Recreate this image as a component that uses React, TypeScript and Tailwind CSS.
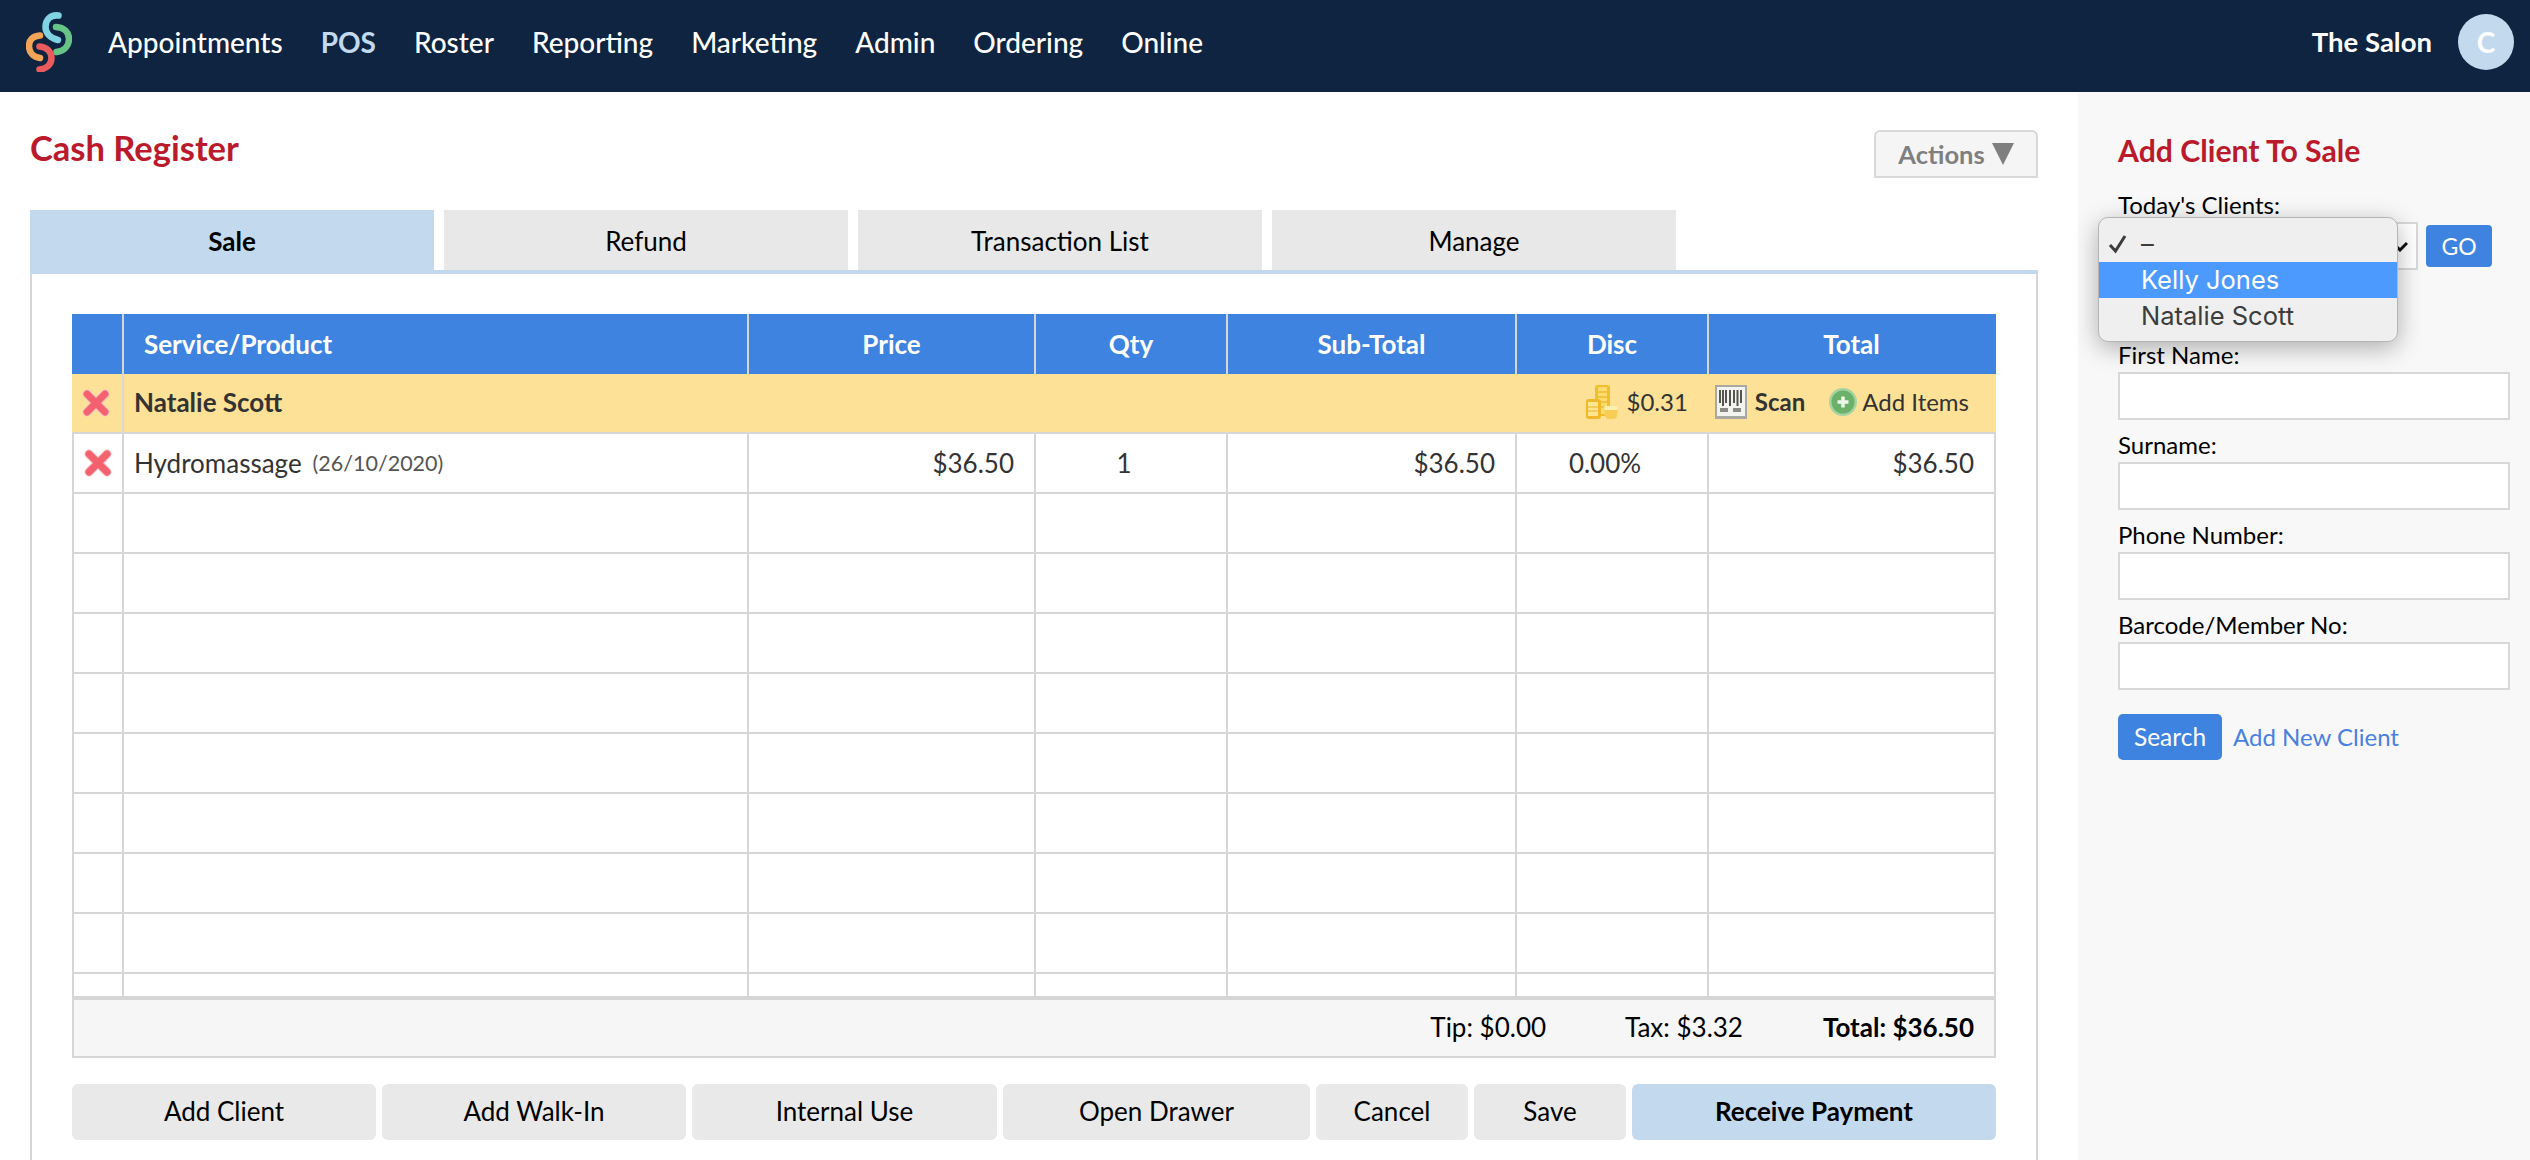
const menu = ["Appointments", "POS", "Roster", "Reporting", "Marketing", "Admin", "Ordering", "Online"];
const tabs = ["Sale", "Refund", "Transaction List", "Manage"];
const emptyRows = [1, 2, 3, 4, 5, 6, 7, 8, 9];
const clients = ["First Name:", "Surname:", "Phone Number:", "Barcode/Member No:"];

const headCols = "grid grid-cols-[52px_625px_287px_192px_289px_192px_287px]";
const rowCols = "grid grid-cols-[50px_625px_287px_192px_289px_192px_287px]";
const cell = "border-r-2 border-[#d6d6d6] h-full";

function Logo() {
  return (
    <svg viewBox="26 12 46 60" className="w-[46px] h-[60px] ml-[26px] shrink-0" fill="none" strokeWidth="6.5" strokeLinecap="round">
      <path d="M58.5 15.5C50 14.5 45.5 20 45.5 27C45.5 33 50 38 58 40" stroke="#7fd3e2" />
      <path d="M56 27C64 27.5 69 32 69 39C69 46 64 51 56.5 52" stroke="#68c386" />
      <path d="M40 35.5C32.5 36 29 40.5 29 46C29 52 33 57 40 58" stroke="#f4a457" />
      <path d="M39.5 46.5C47 47 51.5 52 51.5 58C51.5 64.5 46.5 69 39.5 69.5" stroke="#e95b5c" />
    </svg>
  );
}

function RedX() {
  return (
    <svg viewBox="0 0 28 28" className="w-[28px] h-[28px]" fill="none" strokeLinecap="round">
      <path d="M5 5L23 23M23 5L5 23" stroke="#fbc3c7" strokeWidth="9" />
      <path d="M5 5L23 23M23 5L5 23" stroke="#f4616f" strokeWidth="7" />
    </svg>
  );
}

function Coins() {
  return (
    <svg viewBox="0 0 32 34" className="w-[32px] h-[34px]">
      <rect x="9" y="0" width="15" height="31" rx="3" fill="#f3bd2d" />
      <rect x="12" y="2" width="9" height="27" fill="#fbdc6c" />
      <path d="M12 7h9M12 12h9M12 17h9M12 22h9" stroke="#e8ab20" strokeWidth="1" />
      <rect x="0" y="14" width="15" height="20" rx="3" fill="#f1b82a" />
      <rect x="2" y="17" width="10" height="14" fill="#fde68f" />
      <path d="M2 22h10M2 26h10" stroke="#eab32d" strokeWidth="1" />
      <path d="M18 22h14l-1 9a4 4 0 0 1-4 3h-4a4 4 0 0 1-4-3z" fill="#f6cd55" />
      <rect x="18" y="21" width="14" height="4" rx="2" fill="#fdeeb0" />
    </svg>
  );
}

function Barcode() {
  return (
    <svg viewBox="0 0 32 34" className="w-[32px] h-[34px]">
      <rect x="0" y="0" width="32" height="34" fill="#a9a9a3" />
      <rect x="2" y="2" width="28" height="29" fill="#f3f3f1" />
      <path d="M5 5v13M8 5v16M11 5v13M15 5v16M19 5v13M22.500 5v16M26 5v13" stroke="#55554f" strokeWidth="2" />
      <rect x="5" y="23" width="8" height="4" fill="#8b8b85" />
      <rect x="18" y="23" width="8" height="4" fill="#8b8b85" />
    </svg>
  );
}

function PlusIcon() {
  return (
    <svg viewBox="0 0 28 30" className="w-[28px] h-[30px]">
      <circle cx="14" cy="15" r="14" fill="#a5d4a2" />
      <circle cx="14" cy="15" r="11.500" fill="#6cb169" />
      <path d="M14 9.500v11M8.500 15h11" stroke="#eef7ec" strokeWidth="3.500" />
    </svg>
  );
}

function Row({ children }: { children?: React.ReactNode }) {
  return (
    <div className={`${rowCols} h-[60px] border-b-2 border-l-2 border-[#d6d6d6] text-[#333] items-center`}>
      {children ?? (
        <>
          <div className={cell} />
          <div className={cell} />
          <div className={cell} />
          <div className={cell} />
          <div className={cell} />
          <div className={cell} />
          <div className={cell} />
        </>
      )}
    </div>
  );
}

export default function App() {
  return (
    <div className="h-[1160px] w-full overflow-hidden bg-white flex flex-col [font-family:Lato,sans-serif] text-[26px]">
      {/* Top nav */}
      <header className="h-[92px] pb-[8px] bg-[#0e2440] flex items-center shrink-0">
        <Logo />
        <nav className="flex gap-[38px] ml-[36px] text-[28px]">
          {menu.map((m) => (
            <span key={m} className={m === "POS" ? "text-[#c3daee] font-bold" : "text-white font-medium"}>
              {m}
            </span>
          ))}
        </nav>
        <div className="ml-auto flex items-center mr-[16px]">
          <span className="text-white font-bold text-[27.500px]">The Salon</span>
          <div className="w-[56px] h-[56px] ml-[26px] rounded-full bg-[#c3daee] text-white font-bold text-[28px] flex items-center justify-center">
            C
          </div>
        </div>
      </header>

      <div className="flex flex-1 min-h-0">
        {/* Register */}
        <main className="w-[2078px] shrink-0 pl-[30px] pr-[40px] flex flex-col">
          <div className="h-[118px] flex justify-between items-start shrink-0">
            <h1 className="mt-[34px] text-[34.500px] leading-[44px] font-bold text-[#bb1a2d]">Cash Register</h1>
            <button className="mt-[38px] w-[164px] h-[48px] border-2 border-[#d9d9d9] bg-[#f5f5f5] rounded-t-[6px] text-[#7f7f7f] font-bold text-[25.500px] flex items-center justify-center gap-[7px]">
              Actions
              <svg viewBox="0 0 22 22" className="w-[22px] h-[22px]">
                <path d="M0 0H22L11 22Z" fill="#7f7f7f" />
              </svg>
            </button>
          </div>

          <div className="flex gap-[10px] h-[64px] border-b-4 border-[#c3daee] shrink-0">
            {tabs.map((t, i) => (
              <div
                key={t}
                className={
                  i === 0
                    ? "w-[404px] h-[60px] pt-[2px] bg-[#c3daee] font-bold text-black flex items-center justify-center"
                    : "w-[404px] h-[60px] pt-[2px] bg-[#e8e8e8] text-black flex items-center justify-center"
                }
              >
                {t}
              </div>
            ))}
          </div>

          <div className="flex-1 min-h-0 border-x-2 border-[#d6d6d6] pl-[40px] pr-[40px] pt-[40px]">
            {/* Table head */}
            <div className={`${headCols} h-[60px] bg-[#3f83e0] text-white font-bold items-center text-center`}>
              <div className={cell} />
              <div className={`${cell} flex items-center pl-[20px]`}>Service/Product</div>
              <div className={`${cell} flex items-center justify-center`}>Price</div>
              <div className={`${cell} flex items-center justify-center`}>Qty</div>
              <div className={`${cell} flex items-center justify-center`}>Sub-Total</div>
              <div className={`${cell} flex items-center justify-center`}>Disc</div>
              <div className="flex items-center justify-center pr-[2px]">Total</div>
            </div>

            <div className="h-[622px] overflow-hidden">
              {/* Client row */}
              <div className="h-[60px] flex bg-[#fde197] border-b-2 border-[#d6d6d6] text-[#333] items-center">
                <div className="w-[52px] h-full border-r-2 border-[#d6d6d6] flex items-center justify-center pr-[2px]">
                  <RedX />
                </div>
                <span className="ml-[10px] pb-[2px] font-bold">Natalie Scott</span>
                <div className="ml-auto flex items-center text-[24px] pr-[27px] pb-[2px]">
                  <Coins />
                  <span className="ml-[8px]">$0.31</span>
                  <span className="ml-[27px]">
                    <Barcode />
                  </span>
                  <span className="ml-[8px] font-bold">Scan</span>
                  <span className="ml-[24px]">
                    <PlusIcon />
                  </span>
                  <span className="ml-[5px]">Add Items</span>
                </div>
              </div>

              <Row>
                <div className={`${cell} flex items-center justify-center`}>
                  <RedX />
                </div>
                <div className={`${cell} flex items-center pl-[10px]`}>
                  Hydromassage
                  <span className="ml-[11px] text-[21.500px] text-[#555]">(26/10/2020)</span>
                </div>
                <div className={`${cell} flex items-center justify-end pr-[20px]`}>$36.50</div>
                <div className={`${cell} flex items-center justify-center pr-[14px]`}>1</div>
                <div className={`${cell} flex items-center justify-end pr-[20px]`}>$36.50</div>
                <div className={`${cell} flex items-center justify-center pr-[14px]`}>0.00%</div>
                <div className={`${cell} flex items-center justify-end pr-[20px]`}>$36.50</div>
              </Row>

              {emptyRows.map((r) => (
                <Row key={r} />
              ))}
            </div>

            {/* Totals */}
            <div className="h-[62px] pb-[2px] border-x-2 border-t-4 border-b-2 border-[#d6d6d6] bg-[#f6f6f6] flex items-center justify-end pr-[20px] text-black">
              <span>Tip: $0.00</span>
              <span className="ml-[79px]">Tax: $3.32</span>
              <span className="ml-[80px] font-bold">Total: $36.50</span>
            </div>

            {/* Buttons */}
            <div className="flex gap-[6px] mt-[26px] text-black">
              <button className="w-[304px] h-[56px] pb-[2px] rounded-[6px] bg-[#e9e9e9]">Add Client</button>
              <button className="w-[304px] h-[56px] pb-[2px] rounded-[6px] bg-[#e9e9e9]">Add Walk-In</button>
              <button className="w-[305px] h-[56px] pb-[2px] rounded-[6px] bg-[#e9e9e9]">Internal Use</button>
              <button className="w-[307px] h-[56px] pb-[2px] rounded-[6px] bg-[#e9e9e9]">Open Drawer</button>
              <button className="w-[152px] h-[56px] pb-[2px] rounded-[6px] bg-[#e9e9e9]">Cancel</button>
              <button className="w-[152px] h-[56px] pb-[2px] rounded-[6px] bg-[#e9e9e9]">Save</button>
              <button className="w-[364px] h-[56px] pb-[2px] rounded-[6px] bg-[#c3daee] font-bold">Receive Payment</button>
            </div>
          </div>
        </main>

        {/* Sidebar */}
        <aside className="flex-1 bg-[#f8f8f8] pl-[40px] pr-[20px] relative">
          <h2 className="mt-[38px] h-[40px] leading-[40px] text-[30.200px] font-bold text-[#bb1a2d]">Add Client To Sale</h2>
          <label className="block mt-[20px] h-[32px] leading-[29px] text-[24px] text-black">Today's Clients:</label>
          <div className="flex items-center">
            <div className="w-[300px] h-[48px] border-2 border-[#d8d8d8] bg-white flex items-center justify-end pr-[8px]">
              <svg viewBox="0 0 12 12" className="w-[12px] h-[12px]">
                <path d="M1 7L4 10L11 3" fill="none" stroke="#111" strokeWidth="3" />
              </svg>
            </div>
            <button className="ml-[8px] w-[66px] h-[42px] rounded-[4px] bg-[#3f83e0] text-white text-[23px]">GO</button>
          </div>

          <div className="mt-[70px]">
            {clients.map((c) => (
              <div key={c}>
                <label className="block h-[32px] leading-[29px] text-[24px] text-black">{c}</label>
                <input className="block w-[392px] h-[48px] mb-[10px] border-2 border-[#d8d8d8] bg-white" />
              </div>
            ))}
          </div>

          <div className="flex items-center mt-[24px]">
            <button className="w-[104px] h-[46px] rounded-[5px] bg-[#3f83e0] text-white text-[24.500px]">Search</button>
            <a className="ml-[11px] text-[#4a80e0] text-[24px]">Add New Client</a>
          </div>

          {/* Open select menu */}
          <div className="absolute left-[20px] top-[125px] w-[300px] h-[125px] rounded-[10px] bg-[#efefef] border border-[#b5b5b5] shadow-[0_6px_24px_rgba(0,0,0,0.3)] overflow-hidden [font-family:Inter,sans-serif] text-[25.500px] text-[#3c3c3c] pt-[8px]">
            <div className="h-[36px] flex items-center relative pl-[42px]">
              <svg viewBox="0 0 20 20" className="absolute left-[9px] top-[8px] w-[20px] h-[20px]">
                <path d="M2 11L7.500 17L17 2" fill="none" stroke="#3c3c3c" strokeWidth="3" />
              </svg>
              –
            </div>
            <div className="h-[36px] flex items-center pl-[42px] bg-[#4d9aff] text-white">Kelly Jones</div>
            <div className="h-[36px] flex items-center pl-[42px]">Natalie Scott</div>
          </div>
        </aside>
      </div>
    </div>
  );
}
